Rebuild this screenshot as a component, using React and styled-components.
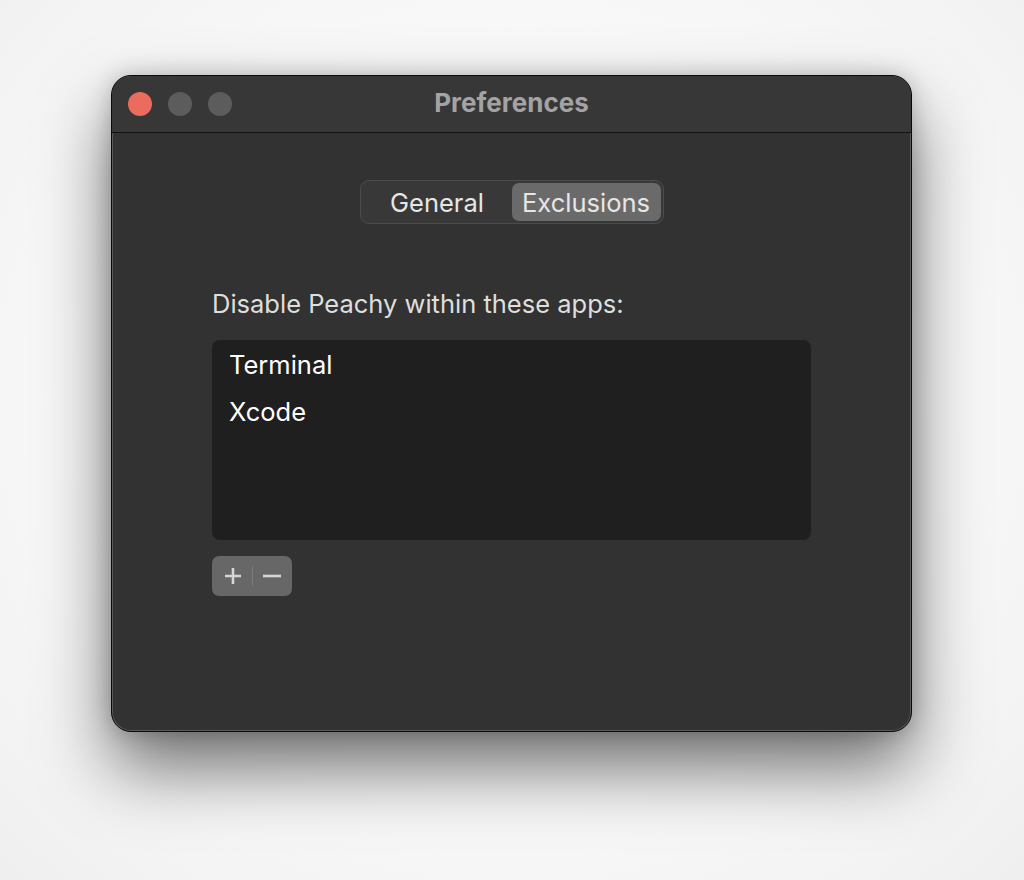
import React from "react";
import styled, { createGlobalStyle } from "styled-components";

const Global = createGlobalStyle`
  html, body { margin: 0; padding: 0; background: #ffffff; }
  body { font-family: Inter, "Noto Sans", sans-serif; -webkit-font-smoothing: antialiased; }
`;

const Page = styled.div`
  width: 1024px;
  height: 880px;
  box-sizing: border-box;
  padding: 75px 0 0 111px;
  background: radial-gradient(ellipse at 50% 45%, #ffffff 0%, #f6f6f6 70%, #efefef 100%);
`;

const Window = styled.div`
  width: 801px;
  height: 657px;
  box-sizing: border-box;
  border: 1px solid #0a0a0a;
  border-radius: 20px;
  background: #323232;
  box-shadow: inset 0 0 0 1px #5a5a5a, 0 36px 70px rgba(0, 0, 0, 0.55), 0 0 22px rgba(0, 0, 0, 0.2);
  overflow: hidden;
  display: flex;
  flex-direction: column;
`;

const TitleBar = styled.div`
  height: 56px;
  flex: none;
  display: grid;
  grid-template-columns: 1fr auto 1fr;
  align-items: center;
  background: #373737;
  border-bottom: 1px solid #111;
  padding: 0 16px;
`;

const Lights = styled.div`
  display: flex;
  gap: 16px;
`;

const Light = styled.span`
  width: 24px;
  height: 24px;
  border-radius: 50%;
  background: ${(p) => p.$color};
`;

const Title = styled.div`
  font-size: 26px;
  line-height: 30px;
  font-weight: 700;
  color: #a3a3a3;
  margin-top: -2px;
`;

const Body = styled.div`
  flex: 1;
  display: flex;
  flex-direction: column;
  padding: 47px 100px 0 100px;
`;

const Segmented = styled.div`
  align-self: center;
  display: flex;
  padding: 2px;
  border-radius: 9px;
  border: 1px solid #4c4c4c;
  background: #383838;
`;

const Segment = styled.div`
  height: 38px;
  display: flex;
  align-items: center;
  justify-content: center;
  width: ${(p) => p.$w}px;
  border-radius: 7px;
  font-size: 25.5px;
  color: #e6e6e6;
  background: ${(p) => (p.$active ? "#6a6a6a" : "transparent")};
`;

const Label = styled.div`
  margin-top: 65px;
  font-size: 25.5px;
  color: #dedede;
  line-height: 30px;
`;

const List = styled.div`
  margin-top: 21px;
  height: 200px;
  border-radius: 8px;
  background: #1f1f1f;
  padding: 8px 17px;
  box-sizing: border-box;
  display: flex;
  flex-direction: column;
`;

const Item = styled.div`
  height: 47px;
  line-height: 34px;
  font-size: 25.5px;
  color: #ffffff;
`;

const Buttons = styled.div`
  margin-top: 16px;
  width: 80px;
  height: 40px;
  border-radius: 7px;
  background: #676767;
  display: flex;
  align-items: center;
  justify-content: center;
  gap: 9px;
`;

const Divider = styled.span`
  width: 1px;
  height: 20px;
  background: #7c7c7c;
`;

const Icon = styled.svg`
  width: 20px;
  height: 20px;
  display: block;
`;

export default function App() {
  return (
    <>
      <Global />
      <Page>
        <Window>
          <TitleBar>
            <Lights>
              <Light $color="#ec6b5f" />
              <Light $color="#5c5c5c" />
              <Light $color="#5c5c5c" />
            </Lights>
            <Title>Preferences</Title>
            <div />
          </TitleBar>
          <Body>
            <Segmented>
              <Segment $w={149}>General</Segment>
              <Segment $w={149} $active>Exclusions</Segment>
            </Segmented>
            <Label>Disable Peachy within these apps:</Label>
            <List>
              <Item>Terminal</Item>
              <Item>Xcode</Item>
            </List>
            <Buttons>
              <Icon viewBox="0 0 20 20">
                <path d="M10 2v16M2 10h16" stroke="#d6d6d6" strokeWidth="2.6" />
              </Icon>
              <Divider />
              <Icon viewBox="0 0 20 20">
                <path d="M1 10h18" stroke="#d6d6d6" strokeWidth="2.6" />
              </Icon>
            </Buttons>
          </Body>
        </Window>
      </Page>
    </>
  );
}
